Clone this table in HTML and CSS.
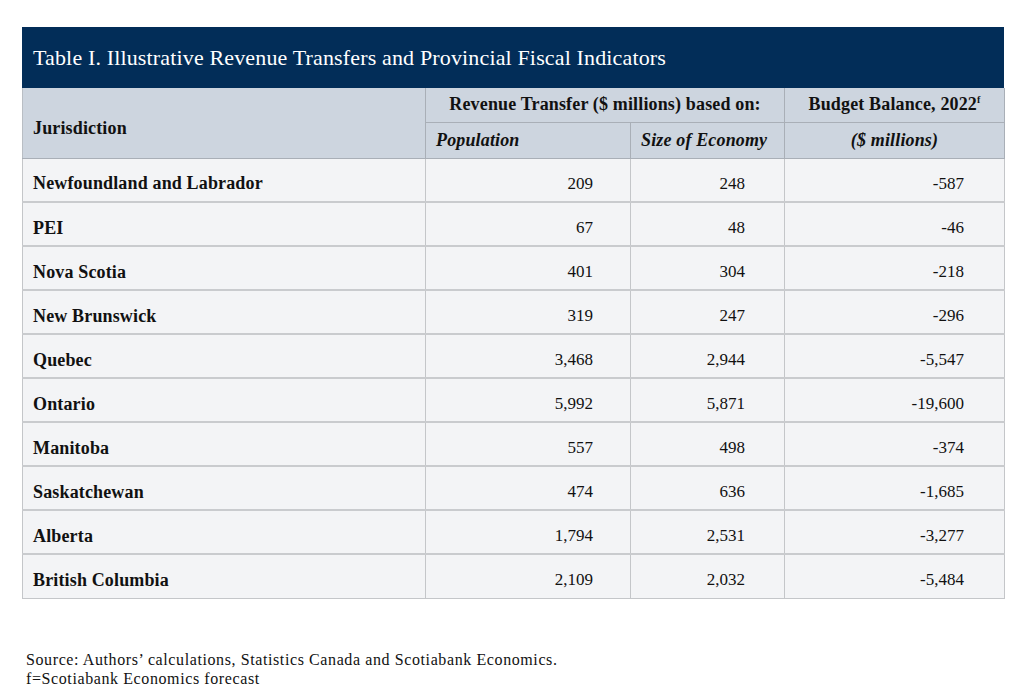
FILE: index.html
```html
<!DOCTYPE html>
<html lang="en">
<head>
<meta charset="utf-8">
<title>Table I</title>
<link rel="stylesheet" href="styles.css">
</head>
<body>
<div class="page">
  <div class="panel">
    <div class="title">Table I. Illustrative Revenue Transfers and Provincial Fiscal Indicators</div>
    <table class="data">
      <colgroup>
        <col class="c-jur">
        <col class="c-pop">
        <col class="c-eco">
        <col class="c-bud">
      </colgroup>
      <thead>
        <tr class="h1">
          <th rowspan="2" class="jur-h">Jurisdiction</th>
          <th colspan="2" class="center">Revenue Transfer ($ millions) based on:</th>
          <th class="center">Budget Balance, 2022<sup>f</sup></th>
        </tr>
        <tr class="h2">
          <th class="ital left">Population</th>
          <th class="ital left">Size of Economy</th>
          <th class="ital center">($ millions)</th>
        </tr>
      </thead>
      <tbody>
        <tr><th>Newfoundland and Labrador</th><td>209</td><td>248</td><td>-587</td></tr>
        <tr><th>PEI</th><td>67</td><td>48</td><td>-46</td></tr>
        <tr><th>Nova Scotia</th><td>401</td><td>304</td><td>-218</td></tr>
        <tr><th>New Brunswick</th><td>319</td><td>247</td><td>-296</td></tr>
        <tr><th>Quebec</th><td>3,468</td><td>2,944</td><td>-5,547</td></tr>
        <tr><th>Ontario</th><td>5,992</td><td>5,871</td><td>-19,600</td></tr>
        <tr><th>Manitoba</th><td>557</td><td>498</td><td>-374</td></tr>
        <tr><th>Saskatchewan</th><td>474</td><td>636</td><td>-1,685</td></tr>
        <tr><th>Alberta</th><td>1,794</td><td>2,531</td><td>-3,277</td></tr>
        <tr><th>British Columbia</th><td>2,109</td><td>2,032</td><td>-5,484</td></tr>
      </tbody>
    </table>
  </div>
  <div class="notes">
    <p>Source: Authors’ calculations, Statistics Canada and Scotiabank Economics.</p>
    <p>f=Scotiabank Economics forecast</p>
  </div>
</div>
</body>
</html>
```
FILE: styles.css
```css
html, body {
  margin: 0;
  padding: 0;
  background: #ffffff;
}
body {
  font-family: "Liberation Serif", "Times New Roman", serif;
  color: #111111;
}
.page {
  padding: 27px 20px 0 22px;
}
.panel {
  width: 982px;
}
.title {
  background: #022d58;
  color: #ffffff;
  height: 61px;
  box-sizing: border-box;
  padding: 19px 0 0 11px;
  font-size: 22px;
  letter-spacing: 0.15px;
  line-height: 24px;
}
.data {
  width: 982px;
  border-collapse: collapse;
  table-layout: fixed;
  font-size: 17px;
}
.c-jur { width: 403px; }
.c-pop { width: 205px; }
.c-eco { width: 154px; }
.c-bud { width: 220px; }
.data thead th {
  background: #cdd5df;
  border: 1px solid #a9afb7;
  font-weight: bold;
  font-size: 18px;
  letter-spacing: 0.15px;
  padding: 0 10px;
}
.data thead tr:first-child th {
  border-top: none;
}
.h1 { height: 34px; }
.h2 { height: 36px; }
.data .jur-h {
  text-align: left;
  padding: 12px 10px 0 10px;
  border-left: 1px solid #b9bec4;
}
.center { text-align: center; }
.data .left { text-align: left; }
.ital { font-style: italic; }
sup {
  font-size: 10px;
  vertical-align: 7px;
  line-height: 0;
}
.data tbody tr {
  height: 44px;
}
.data tbody th,
.data tbody td {
  background: #f3f4f6;
  border: 1px solid #c4c6c9;
  border-top: 2px solid #c9cbce;
  padding-top: 8px;
  padding-bottom: 0;
}
.data tbody th {
  text-align: left;
  font-weight: bold;
  font-size: 18px;
  letter-spacing: 0.15px;
  padding-left: 10px;
  padding-right: 10px;
}
.data tbody td {
  text-align: right;
  padding-left: 10px;
  padding-right: 37px;
}
.data tbody td:nth-child(3) { padding-right: 39px; }
.data tbody td:nth-child(4) { padding-right: 40px; }
.data tbody tr:first-child th,
.data tbody tr:first-child td {
  border-top: 1px solid #a9afb7;
}
.notes {
  margin-top: 51px;
  padding-left: 4px;
  font-size: 16px;
  letter-spacing: 0.6px;
  line-height: 19px;
  color: #111111;
}
.notes p { margin: 0; }
```
